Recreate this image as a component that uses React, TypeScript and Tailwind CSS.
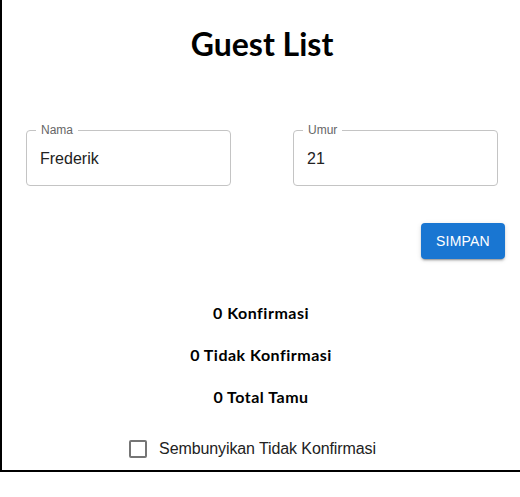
import React from "react";

export default function App() {
  return (
    <div className="w-[520px] bg-white border-l-2 border-b-2 border-black" style={{ fontFamily: "Lato, sans-serif" }}>
      <h1 className="text-center text-[32px] font-bold leading-[38px] pt-[25px] pl-[2px] text-black">Guest List</h1>
      <div className="flex justify-between pl-[24px] pr-[22px] mt-[67px]">
        <Field label="Nama" value="Frederik" />
        <Field label="Umur" value="21" />
      </div>
      <div className="flex justify-end pr-[15px] mt-[37px]">
        <button
          className="h-[36px] w-[84px] rounded-[4px] bg-[#1976d2] text-white text-[14px] uppercase tracking-[0.2px] shadow-[0_3px_1px_-2px_rgba(0,0,0,0.2),0_2px_2px_0_rgba(0,0,0,0.14),0_1px_5px_0_rgba(0,0,0,0.12)]"
          style={{ fontFamily: '"Liberation Sans", Arial, sans-serif' }}
        >
          SIMPAN
        </button>
      </div>
      <div className="flex flex-col items-center mt-[44px] gap-[22px] text-[16px] font-bold leading-[20px] tracking-[0.5px] text-black">
        <div>0 Konfirmasi</div>
        <div>0 Tidak Konfirmasi</div>
        <div>0 Total Tamu</div>
      </div>
      <div className="flex items-center justify-center mt-[30px] pb-[9px] pr-[17px]" style={{ fontFamily: '"Liberation Sans", Arial, sans-serif' }}>
        <div className="w-[18px] h-[18px] border-2 border-[#757575] rounded-[2px]" />
        <span className="ml-[12px] text-[16px] leading-[24px] tracking-[-0.1px] text-[#222]">Sembunyikan Tidak Konfirmasi</span>
      </div>
    </div>
  );
}

function Field({ label, value }: { label: string; value: string }) {
  return (
    <div className="relative w-[205px] h-[56px] rounded-[4px] border border-[#c4c4c4]" style={{ fontFamily: '"Liberation Sans", Arial, sans-serif' }}>
      <span className="absolute -top-[9px] left-[9px] px-[5px] bg-white text-[12px] leading-[16px] text-[#666]">{label}</span>
      <div className="pl-[13px] pt-[16px] text-[16px] leading-[23px] text-[#222]">{value}</div>
    </div>
  );
}
